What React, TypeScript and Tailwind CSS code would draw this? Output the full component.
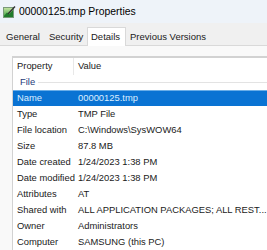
import React from 'react';

const rows: [string, string][] = [
  ['Type', 'TMP File'],
  ['File location', 'C:\\Windows\\SysWOW64'],
  ['Size', '87.8 MB'],
  ['Date created', '1/24/2023 1:38 PM'],
  ['Date modified', '1/24/2023 1:38 PM'],
  ['Attributes', 'AT'],
  ['Shared with', 'ALL APPLICATION PACKAGES; ALL REST...'],
  ['Owner', 'Administrators'],
  ['Computer', 'SAMSUNG (this PC)'],
];

function FileIcon() {
  return (
    <svg width="13" height="13" viewBox="0 0 13 13" className="shrink-0">
      <defs>
        <linearGradient id="g" x1="0" y1="0" x2="0" y2="1">
          <stop offset="0" stopColor="#c9e6a4" />
          <stop offset="1" stopColor="#2f9a3a" />
        </linearGradient>
      </defs>
      <rect x="0.5" y="2.5" width="10" height="10" fill="url(#g)" stroke="#7a9a7a" strokeWidth="1" />
      <path d="M1 11 L4 7.5 L6 9.5 L10 5 L10 12 L1 12 Z" fill="#1f7a2a" />
      <path d="M5 9 L12 1.5" stroke="#333" strokeWidth="1.4" />
    </svg>
  );
}

export default function App() {
  return (
    <div className="w-[267px] h-[250px] overflow-hidden bg-[#f9f9f9] text-[#1a1a1a] font-['Liberation_Sans',Arial,sans-serif]">
      {/* Title bar */}
      <div className="h-[23px] bg-[#eef3f9] flex items-center pl-[3px] gap-[3px]">
        <FileIcon />
        <span className="text-[10.4px] text-black">00000125.tmp Properties</span>
      </div>

      {/* Tabs */}
      <div className="h-[23px] bg-[#f0f0f0] border-b border-[#d9d9d9] flex items-end pl-[2px] text-[9.5px]">
        <div className="w-[43px] h-[16px] pl-[4px] flex items-center">General</div>
        <div className="w-[42px] h-[16px] pl-[4px] flex items-center">Security</div>
        <div className="w-[39px] h-[19px] -mb-px pl-[3px] flex items-center bg-white border border-b-0 border-[#d9d9d9] relative">
          Details
        </div>
        <div className="w-[84px] h-[16px] pl-[4px] flex items-center">Previous Versions</div>
      </div>

      {/* Page */}
      <div className="pl-[12px] pt-[10px]">
        <div className="bg-white border-l border-t-2 border-[#d2d2d2] text-[9.4px]">
          <div className="h-[17px] flex items-center">
            <div className="w-[61px] h-full pl-[4px] flex items-center border-r border-[#e8e8e8]">Property</div>
            <div className="pl-[4px]">Value</div>
          </div>
          <div className="h-[15px] flex items-center pl-[7px]">
            <span className="text-[#1e3a78]">File</span>
            <div className="flex-1 h-px bg-[#e3e3e3] ml-[3px]" />
          </div>
          <div className="h-[16px] flex items-center bg-[#0a73d3] border-t border-[#6aaee8] text-[#dceeff]">
            <div className="w-[61px] pl-[4px]">Name</div>
            <div className="pl-[4px]">00000125.tmp</div>
          </div>
          {rows.map(([k, v]) => (
            <div key={k} className="h-[16px] flex items-center">
              <div className="w-[61px] shrink-0 pl-[4px] whitespace-nowrap">{k}</div>
              <div className="pl-[4px] whitespace-nowrap">{v}</div>
            </div>
          ))}
        </div>
      </div>
    </div>
  );
}
